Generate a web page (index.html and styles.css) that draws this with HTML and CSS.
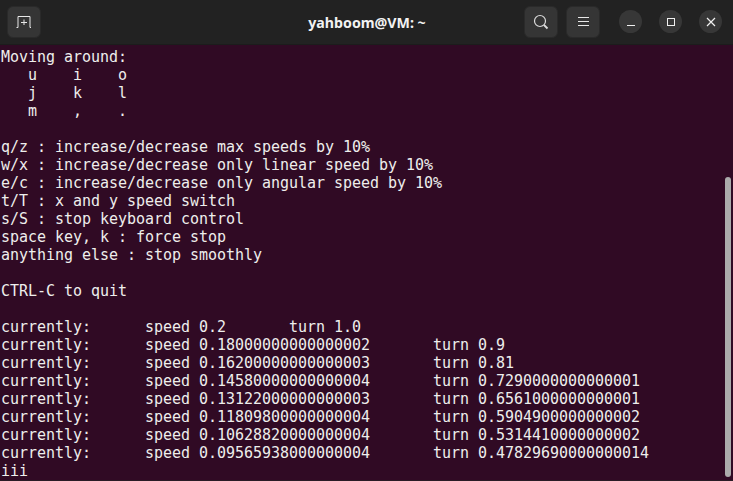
FILE: index.html
```html
<!DOCTYPE html>
<html lang="en">
<head>
<meta charset="utf-8">
<title>yahboom@VM: ~</title>
<link rel="stylesheet" href="styles.css">
</head>
<body>
<div class="window">
  <header class="titlebar">
    <div class="side">
      <button class="tool" aria-label="New tab">
        <svg width="16" height="12" viewBox="0 0 16 12"><path d="M0.500 11.500h1.500V.5h12v11h1M8 3.500v5.500M5 6.500h6" fill="none" stroke="#e8e8e8" stroke-width="1"/></svg>
      </button>
    </div>
    <div class="title">yahboom@VM: ~</div>
    <div class="side end">
      <button class="tool" aria-label="Search">
        <svg width="16" height="16" viewBox="0 0 16 16"><circle cx="7" cy="7" r="5.500" fill="none" stroke="#dcdcdc" stroke-width="1.200"/><path d="M11 11l3.500 3.500" stroke="#dcdcdc" stroke-width="1.800"/></svg>
      </button>
      <button class="tool menu" aria-label="Menu">
        <svg width="11" height="10" viewBox="0 0 11 10"><path d="M0 .5h11M0 4.500h11M0 8.500h11" stroke="#e8e8e8" stroke-width="1"/></svg>
      </button>
      <div class="controls">
        <button class="round" aria-label="Minimize"><svg width="10" height="10" viewBox="0 0 10 10"><path d="M1 8.500h8" stroke="#f0f0f0" stroke-width="1"/></svg></button>
        <button class="round" aria-label="Maximize"><svg width="10" height="10" viewBox="0 0 10 10"><rect x="1.500" y="1.500" width="7" height="7" fill="none" stroke="#f0f0f0" stroke-width="1"/></svg></button>
        <button class="round" aria-label="Close"><svg width="10" height="10" viewBox="0 0 10 10"><path d="M1 1l8 8M9 1l-8 8" stroke="#f0f0f0" stroke-width="1.200"/></svg></button>
      </div>
    </div>
  </header>
  <main class="terminal">
    <pre class="output">Moving around:
   u    i    o
   j    k    l
   m    ,    .

q/z : increase/decrease max speeds by 10%
w/x : increase/decrease only linear speed by 10%
e/c : increase/decrease only angular speed by 10%
t/T : x and y speed switch
s/S : stop keyboard control
space key, k : force stop
anything else : stop smoothly

CTRL-C to quit

currently:      speed 0.2       turn 1.0
currently:      speed 0.18000000000000002       turn 0.9
currently:      speed 0.16200000000000003       turn 0.81
currently:      speed 0.14580000000000004       turn 0.7290000000000001
currently:      speed 0.13122000000000003       turn 0.6561000000000001
currently:      speed 0.11809800000000004       turn 0.5904900000000002
currently:      speed 0.10628820000000004       turn 0.5314410000000002
currently:      speed 0.09565938000000004       turn 0.47829690000000014
iii</pre>
    <div class="scrollbar"></div>
  </main>
</div>
</body>
</html>
```
FILE: styles.css
```css
* { box-sizing: border-box; }
html, body { margin: 0; height: 100%; overflow: hidden; }
.window {
  display: flex; flex-direction: column; height: 481px;
  background: #300a24; border-bottom: 1px solid #2a1c26;
}
.titlebar {
  display: grid; grid-template-columns: 1fr auto 1fr; align-items: center;
  height: 45px; flex: none; padding: 0 11px 0 7px;
  background: #222222; border-bottom: 1px solid #1c1c1c;
}
.side { display: flex; align-items: center; }
.end { justify-content: flex-end; }
.tool {
  display: flex; align-items: center; justify-content: center;
  width: 34px; height: 32px; margin-top: -1px; padding: 0;
  background: #353535; border: 1px solid #2a2a2a; border-radius: 6px;
}
.menu { margin-left: 8px; }
.title {
  color: #f2f2f2; padding-left: 5px; text-align: center;
  font: 700 14.200px "Noto Sans", "Open Sans", sans-serif;
}
.controls { display: flex; gap: 17px; margin-left: 19px; }
.round {
  display: flex; align-items: center; justify-content: center;
  width: 23px; height: 23px; margin-top: -1px; padding: 0;
  background: #373737; border: 0; border-radius: 50%;
}
.terminal { flex: 1; position: relative; overflow: hidden; }
.output {
  margin: 0; padding: 3px 0 0 1px; color: #eeeeec;
  font: 15px/18px "DejaVu Sans Mono", monospace;
  letter-spacing: -0.03px;
}
.scrollbar {
  position: absolute; right: 2px; top: 132px; bottom: 3px; width: 6px;
  background: #ababab; border-radius: 3px;
}
```
